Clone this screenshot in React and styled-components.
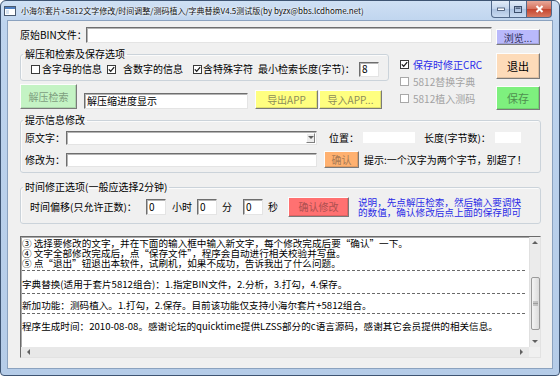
import React from 'react'
import styled, { createGlobalStyle } from 'styled-components'

const GlobalStyle = createGlobalStyle`
  html, body { margin: 0; padding: 0; background: #fff; }
  body { font-family: "Noto Sans CJK SC", "Noto Sans", sans-serif; font-size: 10px; color: #000; }
  * { box-sizing: border-box; }
`

const Window = styled.div`
  width: 560px;
  height: 376px;
  display: flex;
  flex-direction: column;
  border: 1px solid #3e5472;
  border-radius: 6px 6px 4px 4px;
  overflow: hidden;
  background: linear-gradient(180deg, #cfe0f4 0px, #bed4ee 22px, #b5cce8 100%);
`

const TitleBar = styled.div`
  height: 20px;
  flex: none;
  display: flex;
  align-items: center;
  padding-left: 3px;
`

const TitleText = styled.span`
  margin-left: 5px;
  font-size: 8px;
  line-height: 10px;
  color: #101010;
  white-space: nowrap;
  text-shadow: 0 0 4px #fff, 0 0 2px #fff;
`

const Controls = styled.div`
  margin-left: auto;
  margin-right: 7px;
  align-self: flex-start;
  display: flex;
`

const CtrlBtn = styled.div`
  width: ${p => p.$w}px;
  height: 17px;
  display: flex;
  align-items: center;
  justify-content: center;
  border: 1px solid #52698a;
  border-top: none;
  border-left: ${p => (p.$first ? '1px solid #52698a' : 'none')};
  border-radius: ${p => (p.$first ? '0 0 0 4px' : p.$close ? '0 0 4px 0' : '0')};
  background: ${p => (p.$close
    ? 'linear-gradient(180deg, #e8a899 0%, #d6725e 48%, #c4452f 52%, #d8775f 100%)'
    : 'linear-gradient(180deg, #e2ecf8 0%, #c3d5ec 48%, #aec4e2 52%, #c9dbf1 100%)')};
`

const Client = styled.div`
  flex: 1;
  margin: 0 7px 7px;
  background: #f0f0f0;
  box-shadow: 0 0 0 1px #8ba2bf;
  padding: 0 12px;
  display: flex;
  flex-direction: column;
`

const Row = styled.div`
  display: flex;
  align-items: ${p => p.$align || 'center'};
  height: ${p => p.$h}px;
  margin-top: ${p => p.$mt || 0}px;
  padding-left: ${p => p.$pl || 0}px;
  flex: none;
`

const Text = styled.span`
  flex: none;
  width: ${p => (p.$w ? `${p.$w}px` : 'auto')};
  margin-left: ${p => p.$ml || 0}px;
  color: ${p => p.$color || '#000'};
  font-size: ${p => p.$fs || 10}px;
  line-height: ${p => p.$lh || 12}px;
  white-space: nowrap;
`

const TextBox = styled.div`
  flex: none;
  width: ${p => p.$w}px;
  height: ${p => p.$h}px;
  margin-left: ${p => p.$ml || 0}px;
  margin-top: ${p => p.$mt || 0}px;
  background: #fff;
  border: 1px solid;
  border-color: #6e6e6e #e4e4e4 #e4e4e4 #6e6e6e;
  box-shadow: inset 1px 1px 0 #b4b4b4;
  padding-left: 2px;
  display: flex;
  align-items: center;
  font-size: 10px;
  line-height: 12px;
  white-space: nowrap;
  overflow: hidden;
`

const Blank = styled.div`
  flex: none;
  width: ${p => p.$w}px;
  height: ${p => p.$h}px;
  background: #fff;
`

const Button = styled.div`
  flex: none;
  width: ${p => p.$w}px;
  height: ${p => p.$h}px;
  margin-left: ${p => p.$ml || 0}px;
  margin-top: ${p => p.$mt || 0}px;
  background: ${p => p.$bg};
  color: ${p => p.$fg || '#000'};
  font-size: ${p => p.$fs || 10}px;
  border: 1px solid;
  border-color: #fdfdfd #7a7a7a #7a7a7a #fdfdfd;
  box-shadow: inset -1px -1px 0 rgba(0, 0, 0, 0.12);
  display: flex;
  align-items: center;
  justify-content: center;
  white-space: nowrap;
`

const Group = styled.fieldset`
  flex: none;
  margin: ${p => p.$mt || 0}px 0 0;
  padding: 0;
  min-width: 0;
  width: ${p => p.$w}px;
  height: ${p => p.$h}px;
  border: 1px solid #cbd3da;
  border-radius: 3px;
  box-shadow: inset 1px 1px 0 #fbfbfb;
`

const Legend = styled.legend`
  margin-left: 2px;
  padding: 0 2px;
  font-size: 10px;
  line-height: 12px;
`

const Middle = styled.div`
  display: flex;
  margin-top: 3px;
  flex: none;
`

const LeftCol = styled.div`
  width: 372px;
  display: flex;
  flex-direction: column;
`

const CheckCol = styled.div`
  width: 104px;
  padding: 8px 0 0 8px;
  display: flex;
  flex-direction: column;
`

const ExitCol = styled.div`
  width: 44px;
  padding-top: 5px;
  display: flex;
  flex-direction: column;
  gap: 7px;
`

const CheckItem = styled.div`
  flex: none;
  display: flex;
  align-items: center;
  gap: ${p => p.$gap ?? 4}px;
  width: ${p => (p.$w ? `${p.$w}px` : 'auto')};
  height: ${p => p.$h || 16}px;
  color: ${p => p.$color || '#000'};
  white-space: nowrap;
  line-height: 12px;
`

const Box = styled.span`
  flex: none;
  width: 9px;
  height: 9px;
  border: 1px solid ${p => (p.$disabled ? '#a8a8a8' : '#3a3a3a')};
  background: #fff;
  display: inline-flex;
  align-items: center;
  justify-content: center;
`

const Combo = styled(TextBox)`
  justify-content: flex-end;
  padding: 0 1px 0 0;
`

const DropBtn = styled.div`
  width: 9px;
  height: 10px;
  border: 1px solid;
  border-color: #fff #808080 #808080 #fff;
  background: #ececec;
  display: flex;
  align-items: center;
  justify-content: center;
`

const Hint = styled.div`
  margin-left: 9px;
  color: #2a2ae6;
  font-size: 9.6px;
  line-height: 10px;
  white-space: nowrap;
`

const LogBox = styled.div`
  flex: none;
  margin-top: 12px;
  width: 521px;
  height: 122px;
  background: #fff;
  border: 1px solid;
  border-color: #6a6a6a #e2e2e2 #e2e2e2 #6a6a6a;
  box-shadow: inset 1px 1px 0 #a8a8a8;
  display: grid;
  grid-template-columns: 1fr 11px;
  grid-template-rows: 1fr 10px;
`

const LogBody = styled.div`
  overflow: hidden;
  padding: 1px 2px 0 1px;
  white-space: nowrap;
  font-size: 9.6px;
`

const LogLine = styled.div`
  line-height: ${p => p.$lh || 10}px;
  margin-top: ${p => p.$mt || 0}px;
`

const Dash = styled.div`
  height: 1px;
  margin-top: ${p => p.$mt || 0}px;
  background: repeating-linear-gradient(90deg, #6a6a6a 0 3px, transparent 3px 5px);
`

const VScroll = styled.div`
  background: #ebebeb;
  border-left: 1px solid #e0e0e0;
  display: flex;
  flex-direction: column;
`

const HScroll = styled.div`
  background: #e8e8e8;
  display: flex;
  align-items: center;
  justify-content: space-between;
  padding: 0 4px 0 5px;
`

const Arrow = styled.div`
  height: 11px;
  display: flex;
  align-items: center;
  justify-content: center;
  flex: none;
`

const Thumb = styled.div`
  margin: 29px 0 0 1px;
  height: 53px;
  border: 1px solid #9a9a9a;
  border-radius: 2px;
  background: linear-gradient(90deg, #f4f4f4, #dcdcdc);
  display: flex;
  align-items: center;
  justify-content: center;
`

const Corner = styled.div`
  background: #f0f0f0;
`

const Check = ({ checked, disabled }) => (
  <Box $disabled={disabled}>
    {checked && (
      <svg width="7" height="7" viewBox="0 0 7 7">
        <path d="M0.8 3.4 L2.7 5.3 L6.2 1.2" fill="none" stroke="#1a1a1a" strokeWidth="1.3" />
      </svg>
    )}
  </Box>
)

const AppIcon = () => (
  <svg width="12" height="12" viewBox="0 0 12 12">
    <rect x="0.5" y="1.5" width="11" height="9" fill="#fff" stroke="#4a5a70" />
    <rect x="1" y="2" width="10" height="2" fill="#4f7fc0" />
    <rect x="2" y="5" width="3" height="4" fill="#d8e4f2" />
  </svg>
)

const Tri = ({ dir }) => {
  const d = {
    up: 'M0 4 L3 1 L6 4 Z',
    down: 'M0 1 L3 4 L6 1 Z',
    left: 'M4 0 L1 3 L4 6 Z',
    right: 'M1 0 L4 3 L1 6 Z'
  }[dir]
  return (
    <svg width="6" height="6" viewBox="0 0 6 6">
      <path d={d} fill="#606060" />
    </svg>
  )
}

export default function App () {
  return (
    <>
      <GlobalStyle />
      <Window>
        <TitleBar>
          <AppIcon />
          <TitleText>小海尔套片+5812文字修改/时间调整/测码植入/字典替换V4.5测试版(by byzx@bbs.lcdhome.net)</TitleText>
          <Controls>
            <CtrlBtn $w={19} $first>
              <svg width="8" height="4" viewBox="0 0 8 4"><rect x="0.5" y="1" width="7" height="2.5" fill="#fff" stroke="#3b4e6b" strokeWidth="0.8" /></svg>
            </CtrlBtn>
            <CtrlBtn $w={17}>
              <svg width="8" height="7" viewBox="0 0 8 7"><rect x="0.5" y="0.5" width="7" height="6" fill="none" stroke="#3b4e6b" strokeWidth="1" /><rect x="1.5" y="1.5" width="5" height="1.3" fill="#3b4e6b" /></svg>
            </CtrlBtn>
            <CtrlBtn $w={25} $close>
              <svg width="9" height="8" viewBox="0 0 9 8"><path d="M1.5 1 L7.5 7 M7.5 1 L1.5 7" stroke="#fff" strokeWidth="2" /></svg>
            </CtrlBtn>
          </Controls>
        </TitleBar>

        <Client>
          <Row $h={18} $mt={6} $align="flex-start">
            <Text $w={66} $lh={16}>原始BIN文件：</Text>
            <TextBox $w={406} $h={16} />
            <Button $w={44} $h={16} $ml={4} $mt={2} $bg="#b9b9fb" $fg="#30305a">浏览...</Button>
          </Row>

          <Middle>
            <LeftCol>
              <Group $w={369} $h={33}>
                <Legend>解压和检索及保存选项</Legend>
                <Row $h={16} $mt={1} $pl={10}>
                  <CheckItem $w={76} $gap={2}><Check />含字母的信息</CheckItem>
                  <CheckItem $w={86} $gap={7}><Check checked />含数字的信息</CheckItem>
                  <CheckItem $w={65} $gap={1}><Check checked />含特殊字符</CheckItem>
                  <Text $w={101}>最小检索长度(字节)：</Text>
                  <TextBox $w={20} $h={15}>8</TextBox>
                </Row>
              </Group>
              <Row $h={26} $mt={2} $align="flex-end">
                <Button $w={57} $h={25} $bg="#c4f3c4" $fg="#7e9e7e">解压检索</Button>
                <TextBox $w={164} $h={16} $ml={7}>解压缩进度显示</TextBox>
                <Button $w={63} $h={19} $ml={7} $bg="#ffff80" $fg="#8e8e5a">导出APP</Button>
                <Button $w={63} $h={19} $ml={1} $bg="#ffff80" $fg="#8e8e5a">导入APP...</Button>
              </Row>
            </LeftCol>
            <CheckCol>
              <CheckItem $h={17} $color="#2b2bea"><Check checked />保存时修正CRC</CheckItem>
              <CheckItem $h={17} $color="#a2a2a2"><Check disabled />5812替换字典</CheckItem>
              <CheckItem $h={17} $color="#a2a2a2"><Check disabled />5812植入测码</CheckItem>
            </CheckCol>
            <ExitCol>
              <Button $w={44} $h={26} $bg="#fddbb9" $fs={11}>退出</Button>
              <Button $w={44} $h={24} $bg="#7ef07e" $fg="#4f8f4f" $fs={11}>保存</Button>
            </ExitCol>
          </Middle>

          <Group $w={521} $h={59} $mt={4}>
            <Legend>提示信息修改</Legend>
            <Row $h={15} $mt={4} $pl={4}>
              <Text $w={41}>原文字：</Text>
              <Combo $w={251} $h={14}>
                <DropBtn><Tri dir="down" /></DropBtn>
              </Combo>
              <Text $w={34} $ml={12}>位置：</Text>
              <Blank $w={52} $h={11} />
              <Text $w={71} $ml={9}>长度(字节数)：</Text>
              <Blank $w={26} $h={11} />
            </Row>
            <Row $h={17} $mt={6} $pl={4}>
              <Text $w={41}>修改为：</Text>
              <TextBox $w={251} $h={14} />
              <Button $w={35} $h={17} $ml={7} $bg="#ffb170" $fg="#a77a55">确认</Button>
              <Text $ml={5}>提示:一个汉字为两个字节，别超了！</Text>
            </Row>
          </Group>

          <Group $w={521} $h={43} $mt={8}>
            <Legend>时间修正选项(一般应选择2分钟)</Legend>
            <Row $h={21} $mt={3} $pl={9}>
              <Text $w={116}>时间偏移(只允许正数)：</Text>
              <TextBox $w={20} $h={16}>0</TextBox>
              <Text $w={25} $ml={6}>小时</Text>
              <TextBox $w={20} $h={16}>0</TextBox>
              <Text $w={21} $ml={5}>分</Text>
              <TextBox $w={20} $h={16}>0</TextBox>
              <Text $w={20} $ml={5}>秒</Text>
              <Button $w={61} $h={20} $bg="#ff7171" $fg="#ad5050">确认修改</Button>
              <Hint>
                说明，先点解压检索，然后输入要调快<br />
                的数值，确认修改后点上面的保存即可
              </Hint>
            </Row>
          </Group>

          <LogBox>
            <LogBody>
              <LogLine>③ 选择要修改的文字，并在下面的输入框中输入新文字，每个修改完成后要“确认”一下。</LogLine>
              <LogLine>④ 文字全部修改完成后，点“保存文件”，程序会自动进行相关校验并写盘。</LogLine>
              <LogLine>⑤ 点“退出”钮退出本软件，试刷机，如果不成功，告诉我出了什么问题。</LogLine>
              <Dash $mt={2} />
              <LogLine $mt={7} $lh={12}>字典替换(适用于套片5812组合)：1.指定BIN文件，2.分析，3.打勾，4.保存。</LogLine>
              <Dash $mt={3} />
              <LogLine $mt={5} $lh={12}>新加功能：测码植入。1.打勾，2.保存。目前该功能仅支持小海尔套片+5812组合。</LogLine>
              <Dash $mt={2} />
              <LogLine $mt={6} $lh={12}>程序生成时间：2010-08-08。感谢论坛的quicktime提供LZSS部分的c语言源码，感谢其它会员提供的相关信息。</LogLine>
            </LogBody>
            <VScroll>
              <Arrow><Tri dir="up" /></Arrow>
              <Thumb>
                <svg width="5" height="5" viewBox="0 0 5 5"><path d="M0 1 H5 M0 2.5 H5 M0 4 H5" stroke="#8a8a8a" strokeWidth="0.8" /></svg>
              </Thumb>
              <Arrow style={{ marginTop: 'auto' }}><Tri dir="down" /></Arrow>
            </VScroll>
            <HScroll>
              <Tri dir="left" />
              <Tri dir="right" />
            </HScroll>
            <Corner />
          </LogBox>
        </Client>
      </Window>
    </>
  )
}
